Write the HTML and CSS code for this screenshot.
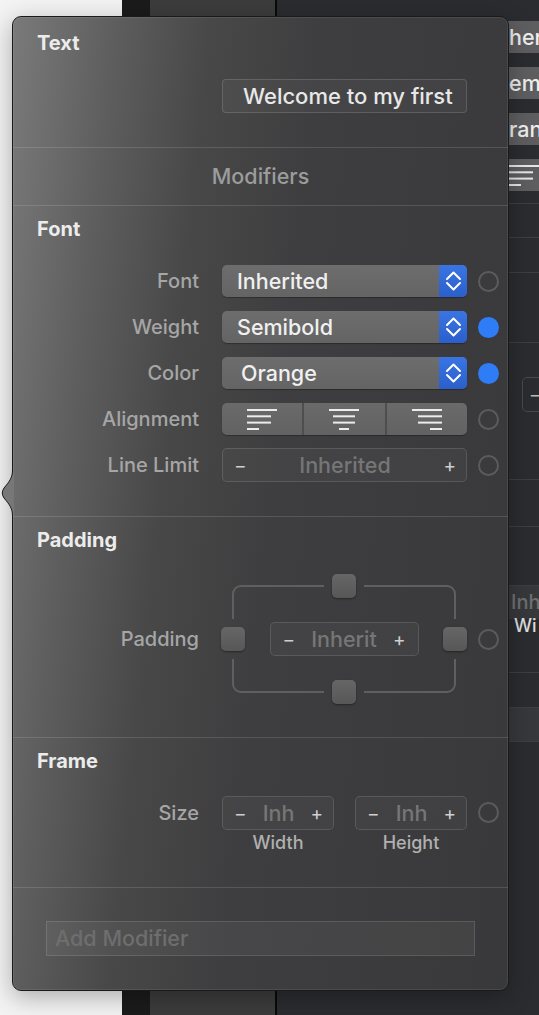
FILE: index.html
```html
<!DOCTYPE html>
<html lang="en">
<head>
  <meta charset="UTF-8" />
  <meta name="viewport" content="width=device-width, initial-scale=1.0"/>
  <title>Text Inspector</title>
  <link rel="stylesheet" href="styles.css">
</head>
<body>

  <!-- janela do Xcode por trás do popover -->
  <div class="backdrop">
    <div class="bg-sidebar"></div>
    <div class="bg-gutter"></div>
    <div class="bg-canvas"></div>
    <div class="bg-rule"></div>
    <div class="bg-inspector">
      <div class="bi-pill">her</div>
      <div class="bi-pill">emi</div>
      <div class="bi-pill">ran</div>
      <div class="bi-pill bi-align">
        <svg width="30" height="21" viewBox="0 0 30 21"><g fill="#e6e6e6"><rect x="0" y="0" width="30" height="2"/><rect x="0" y="6.3" width="24" height="2"/><rect x="0" y="12.6" width="24" height="2"/><rect x="0" y="19" width="12" height="2"/></g></svg>
      </div>
      <div class="bi-row bi-h13"></div>
      <div class="bi-row bi-h34"></div>
      <div class="bi-row bi-h35"></div>
      <div class="bi-row bi-h70"></div>
      <div class="bi-row bi-h103"><div class="bi-box">−</div></div>
      <div class="bi-row bi-h47"></div>
      <div class="bi-row bi-h59"></div>
      <div class="bi-band bi-h33"><span class="bi-muted">Inh</span></div>
      <div class="bi-row bi-h58"><span class="bi-caption">Wi</span></div>
      <div class="bi-row bi-h35"></div>
      <div class="bi-band bi-row bi-h34"></div>
    </div>
  </div>

  <!-- popover de modificadores -->
  <div class="popover">
    <svg class="popover-arrow" width="14" height="46" viewBox="0 0 14 46">
      <path d="M14 0 L12.5 0 C12.5 8 9 12 4 18 Q0.5 23 4 28 C9 34 12.5 38 12.5 46 L14 46 Z" fill="#777777"/>
      <path d="M12.5 0 C12.5 8 9 12 4 18 Q0.5 23 4 28 C9 34 12.5 38 12.5 46" fill="none" stroke="#1c1c1c" stroke-width="1"/>
    </svg>

    <section class="pane pane-text">
      <h2 class="pane-title">Text</h2>
      <div class="text-field">Welcome to my first</div>
    </section>

    <div class="pane-heading">Modifiers</div>

    <section class="pane pane-font">
      <h2 class="pane-title">Font</h2>
      <div class="rows">
        <div class="row">
          <span class="row-label">Font</span>
          <div class="popup">
            <span class="popup-value">Inherited</span>
            <span class="popup-arrows">
              <svg width="28" height="32" viewBox="0 0 28 32"><path d="M8 14 L14.5 7.5 L21 14 M8 18 L14.5 24.5 L21 18" fill="none" stroke="#fff" stroke-width="2" stroke-linecap="round" stroke-linejoin="round"/></svg>
            </span>
          </div>
          <span class="dot"></span>
        </div>
        <div class="row">
          <span class="row-label">Weight</span>
          <div class="popup">
            <span class="popup-value">Semibold</span>
            <span class="popup-arrows">
              <svg width="28" height="32" viewBox="0 0 28 32"><path d="M8 14 L14.5 7.5 L21 14 M8 18 L14.5 24.5 L21 18" fill="none" stroke="#fff" stroke-width="2" stroke-linecap="round" stroke-linejoin="round"/></svg>
            </span>
          </div>
          <span class="dot dot-on"></span>
        </div>
        <div class="row">
          <span class="row-label">Color</span>
          <div class="popup">
            <span class="popup-value popup-value-indent">Orange</span>
            <span class="popup-arrows">
              <svg width="28" height="32" viewBox="0 0 28 32"><path d="M8 14 L14.5 7.5 L21 14 M8 18 L14.5 24.5 L21 18" fill="none" stroke="#fff" stroke-width="2" stroke-linecap="round" stroke-linejoin="round"/></svg>
            </span>
          </div>
          <span class="dot dot-on"></span>
        </div>
        <div class="row">
          <span class="row-label">Alignment</span>
          <div class="segmented">
            <span class="segment">
              <svg width="30" height="21" viewBox="0 0 30 21"><g fill="#ececec"><rect x="0" y="0" width="30" height="2"/><rect x="0" y="6.3" width="24" height="2"/><rect x="0" y="12.6" width="24" height="2"/><rect x="0" y="19" width="12" height="2"/></g></svg>
            </span>
            <span class="segment">
              <svg width="30" height="21" viewBox="0 0 30 21"><g fill="#ececec"><rect x="0" y="0" width="30" height="2"/><rect x="4" y="6.3" width="22" height="2"/><rect x="4" y="12.6" width="22" height="2"/><rect x="10" y="19" width="10" height="2"/></g></svg>
            </span>
            <span class="segment">
              <svg width="30" height="21" viewBox="0 0 30 21"><g fill="#ececec"><rect x="0" y="0" width="30" height="2"/><rect x="6" y="6.3" width="24" height="2"/><rect x="6" y="12.6" width="24" height="2"/><rect x="18" y="19" width="12" height="2"/></g></svg>
            </span>
          </div>
          <span class="dot"></span>
        </div>
        <div class="row">
          <span class="row-label">Line Limit</span>
          <div class="stepper stepper-wide">
            <span class="stepper-sign">−</span>
            <span class="stepper-value">Inherited</span>
            <span class="stepper-sign">+</span>
          </div>
          <span class="dot"></span>
        </div>
      </div>
    </section>

    <section class="pane pane-padding">
      <h2 class="pane-title">Padding</h2>
      <div class="row row-padding">
        <span class="row-label">Padding</span>
        <div class="edge-box">
          <svg class="edge-bracket" width="246" height="130" viewBox="0 0 246 130">
            <path d="M12 45 V20 A8 8 0 0 1 20 12 H103 M143 12 H226 A8 8 0 0 1 234 20 V45 M234 85 V110 A8 8 0 0 1 226 118 H143 M103 118 H20 A8 8 0 0 1 12 110 V85" fill="none" stroke="#5f5f5f" stroke-width="2"/>
          </svg>
          <span class="edge edge-top"></span>
          <span class="edge edge-left"></span>
          <div class="stepper stepper-mid">
            <span class="stepper-sign">−</span>
            <span class="stepper-value">Inherit</span>
            <span class="stepper-sign">+</span>
          </div>
          <span class="edge edge-right"></span>
          <span class="edge edge-bottom"></span>
        </div>
        <span class="dot"></span>
      </div>
    </section>

    <section class="pane pane-frame">
      <h2 class="pane-title">Frame</h2>
      <div class="row row-frame">
        <span class="row-label">Size</span>
        <div class="size-pair">
          <div class="size-field">
            <div class="stepper">
              <span class="stepper-sign">−</span>
              <span class="stepper-value">Inh</span>
              <span class="stepper-sign">+</span>
            </div>
            <span class="size-caption">Width</span>
          </div>
          <div class="size-field">
            <div class="stepper">
              <span class="stepper-sign">−</span>
              <span class="stepper-value">Inh</span>
              <span class="stepper-sign">+</span>
            </div>
            <span class="size-caption">Height</span>
          </div>
        </div>
        <span class="dot"></span>
      </div>
    </section>

    <section class="pane pane-add">
      <div class="add-field">Add Modifier</div>
    </section>
  </div>

</body>
</html>
```

FILE: styles.css
```css
:root {
  --fundo: #2b2c2f;
  --linha: rgba(255, 255, 255, 0.13);
  --rotulo: #a6a6a6;
  --texto: #ececec;
  --apagado: #767676;
  --azul: #2e7cf6;
}

* {
  margin: 0;
  padding: 0;
  box-sizing: border-box;
}

body {
  font-family: Inter, "Noto Sans", sans-serif;
  background-color: var(--fundo);
  width: 539px;
  height: 1015px;
  overflow: hidden;
  position: relative;
}

/* fundo (janela por trás) */
.backdrop {
  display: flex;
  height: 1015px;
}

.bg-sidebar {
  flex: 0 0 122px;
  background-color: #f3f3f3;
}

.bg-gutter {
  flex: 0 0 28px;
  background-color: #1b1b1b;
}

.bg-canvas {
  flex: 0 0 125px;
  background-color: #3c3c3c;
}

.bg-rule {
  flex: 0 0 2px;
  background-color: #0a0a0a;
}

.bg-inspector {
  flex: 1;
  min-width: 0;
  overflow: hidden;
  padding-top: 21px;
  background-color: var(--fundo);
}

.bi-pill {
  width: 245px;
  height: 32px;
  margin: 0 0 14px 198px;
  padding-left: 34px;
  border-radius: 5px;
  background-color: #5e5e60;
  color: #eeeeee;
  font-size: 21.5px;
  font-weight: 500;
  line-height: 32px;
  white-space: nowrap;
}

.bi-align {
  margin-bottom: 0;
  display: flex;
  align-items: center;
}

.bi-row {
  border-bottom: 1px solid #3e3f42;
}

.bi-band {
  background-color: #37383b;
}

.bi-h13 { height: 13px; }
.bi-h33 { height: 33px; }
.bi-h34 { height: 34px; }
.bi-h35 { height: 35px; }
.bi-h47 { height: 47px; }
.bi-h58 { height: 58px; }
.bi-h59 { height: 59px; }
.bi-h70 { height: 70px; }
.bi-h103 { height: 103px; }

.bi-box {
  width: 80px;
  height: 35px;
  margin: 34px 0 0 245px;
  padding-left: 6px;
  border: 1px solid #48494c;
  border-radius: 5px;
  color: #bbbbbb;
  font-size: 18px;
  line-height: 33px;
}

.bi-muted {
  display: block;
  margin-left: 234px;
  color: #6f6f72;
  font-size: 20px;
  font-weight: 500;
  line-height: 33px;
}

.bi-caption {
  display: block;
  margin: -4px 0 0 237px;
  color: #dddddd;
  font-size: 18px;
  font-weight: 500;
}

/* popover */
.popover {
  position: absolute;
  left: 12px;
  top: 16px;
  width: 497px;
  height: 975px;
  border: 1px solid #1a1a1a;
  border-radius: 9px;
  background: linear-gradient(96deg, #7a7a7a 0%, #5e5e5e 17%, #484848 33%, #3e3e40 52%, #39393b 100%);
  box-shadow: 0 6px 24px rgba(0, 0, 0, 0.3), inset 0 0 0 1px rgba(255, 255, 255, 0.08);
  color: var(--texto);
}

.popover-arrow {
  position: absolute;
  left: -13px;
  top: 453px;
}

.pane {
  border-bottom: 1px solid var(--linha);
  padding-top: 13px;
}

.pane-title {
  padding-left: 24px;
  font-size: 20px;
  font-weight: 700;
  line-height: 20px;
  color: #ececec;
}

.pane-text {
  height: 131px;
  padding-top: 16px;
}

.text-field {
  width: 245px;
  height: 34px;
  margin: 26px 0 0 209px;
  padding-left: 20px;
  border: 1px solid rgba(255, 255, 255, 0.14);
  border-radius: 4px;
  background-color: rgba(255, 255, 255, 0.04);
  font-size: 22px;
  font-weight: 500;
  line-height: 32px;
  color: #e8e8e8;
  white-space: nowrap;
  overflow: hidden;
}

.pane-heading {
  height: 58px;
  border-bottom: 1px solid var(--linha);
  text-align: center;
  font-size: 21.5px;
  font-weight: 500;
  line-height: 57px;
  color: #9c9c9c;
}

.pane-font { height: 311px; }
.pane-padding { height: 221px; }
.pane-frame { height: 150px; }

.pane-add {
  height: 102px;
  border-bottom: none;
  padding: 33px 0 0 33px;
}

/* linhas com rótulo, controle e indicador */
.rows {
  display: flex;
  flex-direction: column;
  gap: 14px;
  margin-top: 26px;
}

.row {
  display: flex;
  align-items: center;
  height: 32px;
}

.row-label {
  width: 186px;
  margin-right: 23px;
  text-align: right;
  font-size: 20px;
  font-weight: 500;
  color: var(--rotulo);
  white-space: nowrap;
}

.dot {
  width: 21px;
  height: 21px;
  margin-left: 11px;
  border: 2px solid #5b5b5b;
  border-radius: 50%;
  flex-shrink: 0;
}

.dot-on {
  border: none;
  background-color: var(--azul);
}

.popup {
  display: flex;
  width: 245px;
  height: 32px;
  border-radius: 5px;
  overflow: hidden;
  background: linear-gradient(#6d6d6d, #646464);
  box-shadow: 0 1px 1px rgba(0, 0, 0, 0.3);
}

.popup-value {
  flex: 1;
  padding-left: 15px;
  font-size: 21.5px;
  font-weight: 500;
  line-height: 32px;
  color: #f0f0f0;
}

.popup-value-indent {
  padding-left: 19px;
}

.popup-arrows {
  width: 28px;
  background: linear-gradient(#3975e3, #2b5fcb);
  display: flex;
}

.segmented {
  display: flex;
  width: 245px;
  height: 32px;
  border-radius: 5px;
  overflow: hidden;
  background: linear-gradient(#6a6a6a, #626262);
  box-shadow: 0 1px 1px rgba(0, 0, 0, 0.3);
}

.segment {
  flex: 1;
  display: flex;
  justify-content: center;
  align-items: center;
}

.segment + .segment {
  border-left: 2px solid #4e4e4e;
}

.stepper {
  display: flex;
  align-items: center;
  justify-content: space-between;
  width: 112px;
  height: 34px;
  padding: 0 10px 0 11px;
  border: 1px solid rgba(255, 255, 255, 0.12);
  border-radius: 5px;
  background-color: rgba(255, 255, 255, 0.03);
}

.stepper-wide {
  width: 245px;
}

.stepper-mid {
  width: 149px;
  padding: 0 12px 0 12px;
}

.stepper-sign {
  font-size: 19px;
  color: #cfcfcf;
  line-height: 1;
}

.stepper-value {
  font-size: 21.5px;
  font-weight: 500;
  color: var(--apagado);
}

/* padding */
.row-padding {
  height: 130px;
  margin-top: 24px;
}

.row-padding .row-label {
  margin-right: 22px;
}

.edge-box {
  position: relative;
  display: grid;
  grid-template-columns: 24px 1fr 24px;
  grid-template-rows: 24px 1fr 24px;
  width: 246px;
  height: 130px;
}

.edge-bracket {
  position: absolute;
  left: 0;
  top: 0;
}

.edge {
  position: relative;
  width: 24px;
  height: 24px;
  border-radius: 5px;
  background: linear-gradient(#666666, #575757);
  box-shadow: 0 1px 2px rgba(0, 0, 0, 0.4);
}

.edge-top { grid-column: 2; grid-row: 1; justify-self: center; }
.edge-left { grid-column: 1; grid-row: 2; align-self: center; }
.edge-right { grid-column: 3; grid-row: 2; align-self: center; }
.edge-bottom { grid-column: 2; grid-row: 3; justify-self: center; }

.edge-box .stepper-mid {
  grid-column: 2;
  grid-row: 2;
  justify-self: center;
  align-self: center;
  position: relative;
}

/* frame */
.row-frame {
  height: auto;
  align-items: flex-start;
  margin-top: 25px;
}

.row-frame .row-label {
  line-height: 34px;
}

.row-frame .dot {
  margin-top: 6px;
}

.size-pair {
  display: flex;
  gap: 21px;
  width: 245px;
}

.size-field {
  display: flex;
  flex-direction: column;
  align-items: center;
}

.size-caption {
  margin-top: 3px;
  font-size: 18px;
  font-weight: 500;
  line-height: 20px;
  color: #b0b0b0;
}

.add-field {
  width: 429px;
  height: 35px;
  padding-left: 8px;
  border: 1px solid rgba(255, 255, 255, 0.12);
  background-color: rgba(255, 255, 255, 0.05);
  font-size: 21.5px;
  font-weight: 500;
  line-height: 33px;
  color: #6e6e6e;
}
```
